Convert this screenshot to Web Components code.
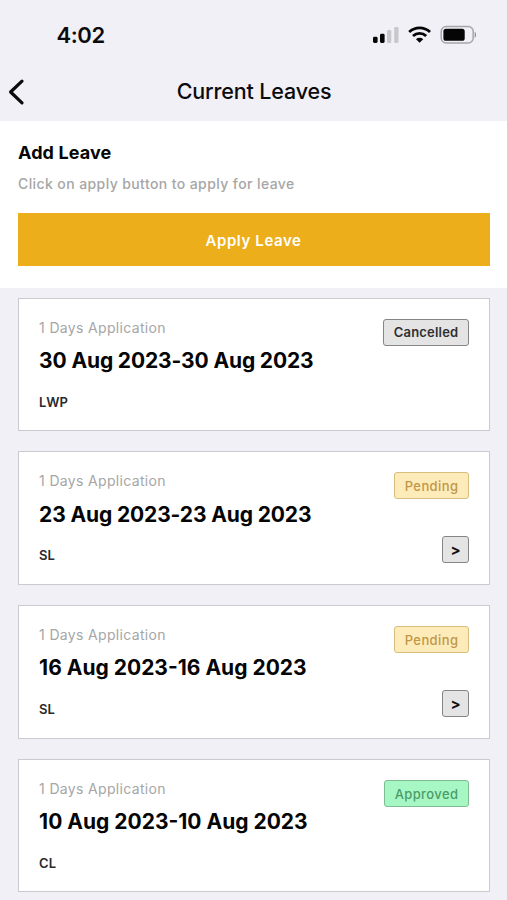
<!DOCTYPE html>
<html lang="en">
<head>
<meta charset="utf-8">
<title>Current Leaves</title>
<style>
html, body { margin: 0; height: 900px; overflow: hidden; background: #f1f0f6; }
body { font-family: Inter, "Liberation Sans", sans-serif; color: #0b0b0d; }
</style>
</head>
<body>
<leave-screen></leave-screen>
<script>
const define = (name, html) => customElements.define(name, class extends HTMLElement {
  constructor() {
    super();
    const t = document.createElement('template');
    t.innerHTML = html;
    this.attachShadow({ mode: 'open' }).append(t.content.cloneNode(true));
  }
});

define('status-bar', `
<style>
:host { display: flex; height: 70px; box-sizing: border-box; padding: 0 31px 0 56.5px; align-items: center; justify-content: space-between; }
time { font-size: 22px; font-weight: 600; line-height: 26px; letter-spacing: -0.4px; }
svg { display: block; }
</style>
<time>4:02</time>
<svg width="106" height="22" viewBox="0 0 106 22">
  <rect x="3" y="12.8" width="4.6" height="6.2" rx="1.4" fill="#050506"/>
  <rect x="10" y="9.8" width="4.6" height="9.2" rx="1.4" fill="#050506"/>
  <rect x="17" y="6" width="4.3" height="13" rx="1.2" fill="#c8c8cc"/>
  <rect x="24.2" y="3" width="4.3" height="16" rx="1.2" fill="#c8c8cc"/>
  <g fill="none" stroke="#050506" stroke-width="2.9">
    <path d="M39.2 8a15.2 15.2 0 0 1 20.8 0"/>
    <path d="M43 12a9.7 9.7 0 0 1 13.2 0"/>
  </g>
  <path d="M46 15.2a5.2 5.2 0 0 1 7.2 0L49.6 18.8z" fill="#050506"/>
  <rect x="71.2" y="2.6" width="32" height="16.4" rx="5" fill="none" stroke="#a5a5aa" stroke-width="1.5"/>
  <rect x="73.4" y="4.8" width="21.3" height="12" rx="2.6" fill="#050506"/>
  <path d="M105 8.4c1.2.5 1.2 4.3 0 4.8z" fill="#8e8e93" stroke="#8e8e93" stroke-width=".6"/>
</svg>`);

define('nav-bar', `
<style>
:host { display: grid; grid-template-columns: 40px 1fr 39px; height: 51px; align-items: center; }
h1 { margin: 0; text-align: center; font-size: 21.5px; font-weight: 500; line-height: 26px; padding-bottom: 9px; letter-spacing: -0.15px; }
svg { display: block; padding-bottom: 8px; }
</style>
<svg width="32" height="30" viewBox="0 0 32 30"><path d="M22 4.2L10.6 15 22 25.8" fill="none" stroke="#0b0b0d" stroke-width="3.2" stroke-linecap="round" stroke-linejoin="round"/></svg>
<h1><slot></slot></h1>`);

define('apply-panel', `
<style>
:host { display: flex; flex-direction: column; height: 166.5px; box-sizing: border-box; padding: 20px 17px 0 18px; background: #fff; }
h2 { margin: 0; font-size: 18px; font-weight: 700; line-height: 24px; letter-spacing: 0.1px; color: #050506; }
p { margin: 8px 0 0; font-size: 14px; font-weight: 500; line-height: 21px; letter-spacing: .4px; color: #a6a6a6; }
button { margin: 19px 0 0; height: 53px; border: 0; padding: 2px 1px 0 0; background: #ecae1a; color: #fff; font: 600 15px/20px Inter, "Liberation Sans", sans-serif; letter-spacing: .6px; }
</style>
<h2>Add Leave</h2>
<p>Click on apply button to apply for leave</p>
<button>Apply Leave</button>`);

define('status-badge', `
<style>
:host { display: block; box-sizing: border-box; height: 27px; padding: 0 9.6px; border: 1px solid #858585; border-radius: 3px; background: #e4e4e4; color: #2f2f31; font-size: 13px; font-weight: 600; line-height: 25px; letter-spacing: .2px; }
:host([kind=pending]) { background: #feebba; border-color: #d9bd7c; color: #c09746; font-weight: 500; letter-spacing: .4px; line-height: 26px; }
:host([kind=approved]) { background: #a7f7c5; border-color: #7cbd92; color: #4b9c68; font-weight: 500; letter-spacing: .4px; line-height: 26px; }
</style>
<slot></slot>`);

define('more-button', `
<style>
:host { display: block; box-sizing: border-box; width: 27px; height: 27px; border: 1px solid #858585; border-radius: 3px; background: #e4e4e4; color: #111; text-align: center; font-size: 15px; font-weight: 700; line-height: 25px; }
</style>
&gt;`);

define('leave-card', `
<style>
:host { display: flex; justify-content: space-between; box-sizing: border-box; height: 133.5px; padding: 20px 20px 0 20.5px; border: 1px solid #cbcbcf; background: #fff; }
.info, .side { display: flex; flex-direction: column; }
.side { align-items: flex-end; gap: 37px; }
.days { font-size: 14px; line-height: 18px; letter-spacing: .33px; color: #a6a6a6; }
.range { margin-top: 10.3px; font-size: 21px; font-weight: 700; line-height: 28px; letter-spacing: var(--range-spacing, -0.13px); color: #050506; }
.type { margin-top: 17.7px; font-size: 13px; font-weight: 600; line-height: 18px; color: #2a2a2c; }
</style>
<div class="info">
  <div class="days"><slot name="days"></slot></div>
  <div class="range"><slot name="range"></slot></div>
  <div class="type"><slot name="type"></slot></div>
</div>
<div class="side"><slot></slot></div>`);

define('leave-screen', `
<style>
:host { display: block; }
main { display: flex; flex-direction: column; gap: 20.3px; padding: 10.1px 17px 8px 17.6px; }
leave-card:nth-child(n+3) { --range-spacing: 0px; }
</style>
<status-bar></status-bar>
<nav-bar>Current Leaves</nav-bar>
<apply-panel></apply-panel>
<main>
  <leave-card><span slot="days">1 Days Application</span><span slot="range">30 Aug 2023-30 Aug 2023</span><span slot="type">LWP</span><status-badge>Cancelled</status-badge></leave-card>
  <leave-card><span slot="days">1 Days Application</span><span slot="range">23 Aug 2023-23 Aug 2023</span><span slot="type">SL</span><status-badge kind="pending">Pending</status-badge><more-button></more-button></leave-card>
  <leave-card><span slot="days">1 Days Application</span><span slot="range">16 Aug 2023-16 Aug 2023</span><span slot="type">SL</span><status-badge kind="pending">Pending</status-badge><more-button></more-button></leave-card>
  <leave-card><span slot="days">1 Days Application</span><span slot="range">10 Aug 2023-10 Aug 2023</span><span slot="type">CL</span><status-badge kind="approved">Approved</status-badge></leave-card>
</main>`);
</script>
</body>
</html>
